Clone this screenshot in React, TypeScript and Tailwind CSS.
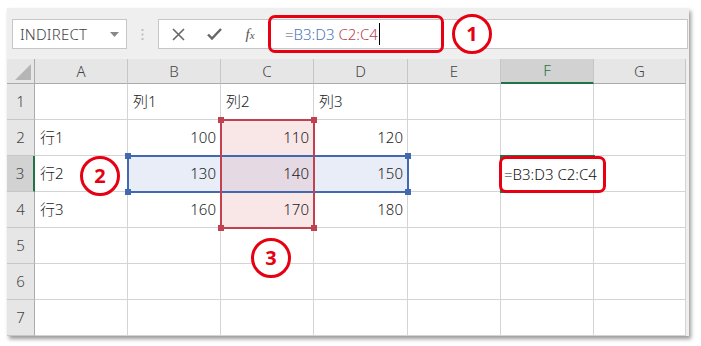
import React from 'react';

const COLS = ['A', 'B', 'C', 'D', 'E', 'F', 'G'];

type Cell = { text?: string; align?: 'left' | 'right'; bg?: string };

const ROWS: Cell[][] = [
  [{}, { text: '列1' }, { text: '列2' }, { text: '列3' }, {}, {}, {}],
  [{ text: '行1' }, { text: '100', align: 'right' }, { text: '110', align: 'right', bg: 'bg-[#f9e6e7]' }, { text: '120', align: 'right' }, {}, {}, {}],
  [
    { text: '行2' },
    { text: '130', align: 'right', bg: 'bg-[#e8edf7]' },
    { text: '140', align: 'right', bg: 'bg-[#e5dae4]' },
    { text: '150', align: 'right', bg: 'bg-[#e8edf7]' },
    {},
    {},
    {},
  ],
  [{ text: '行3' }, { text: '160', align: 'right' }, { text: '170', align: 'right', bg: 'bg-[#f9e6e7]' }, { text: '180', align: 'right' }, {}, {}, {}],
  [{}, {}, {}, {}, {}, {}, {}],
  [{}, {}, {}, {}, {}, {}, {}],
  [{}, {}, {}, {}, {}, {}, {}],
];

function Badge({ n, className }: { n: string; className: string }) {
  return (
    <div
      className={`absolute w-[40px] h-[40px] rounded-full border-[3px] border-[#e60012] bg-white flex items-center justify-center text-[#e60012] text-[20px] font-bold ${className}`}
      style={{ fontFamily: '"Noto Sans", sans-serif' }}
    >
      {n}
    </div>
  );
}

function Handle({ className }: { className: string }) {
  return <div className={`absolute w-[6px] h-[6px] ${className}`} />;
}

export default function App() {
  return (
    <div className="w-[701px] h-[346px] bg-white pt-[8px] pl-[7px] overflow-hidden" style={{ fontFamily: '"Noto Sans", "Noto Sans CJK JP", sans-serif' }}>
      <div className="w-[682px] bg-[#efefef] shadow-[2px_3px_4px_rgba(0,0,0,0.4)]">
        {/* toolbar */}
        <div className="h-[51px] pt-[11px] pl-[5px] pr-[1px] flex items-start">
          <div className="w-[115px] h-[30px] bg-white border border-[#c6c6c6] flex items-center justify-between pl-[7px] pr-[7px]">
            <span className="text-[15px] text-[#444] font-light tracking-[0.2px]">INDIRECT</span>
            <svg width="9" height="5" viewBox="0 0 9 5"><path d="M0 0h9L4.5 5z" fill="#888" /></svg>
          </div>
          <div className="w-[31px] h-[30px] flex items-center justify-center">
            <svg width="3" height="11" viewBox="0 0 3 11">
              <rect x="0.5" y="0" width="2" height="2" fill="#c0c0c0" />
              <rect x="0.5" y="4.5" width="2" height="2" fill="#c0c0c0" />
              <rect x="0.5" y="9" width="2" height="2" fill="#c0c0c0" />
            </svg>
          </div>
          <div className="relative flex-1 h-[30px] bg-white border border-[#c6c6c6] flex items-center">
            <div className="w-[38px] flex justify-center">
              <svg width="13" height="13" viewBox="0 0 13 13"><path d="M1 1l11 11M12 1L1 12" stroke="#666" strokeWidth="1.6" /></svg>
            </div>
            <div className="w-[34px] flex justify-center">
              <svg width="15" height="12" viewBox="0 0 15 12"><path d="M1 6.5l4 4L14 1" stroke="#666" strokeWidth="2.4" fill="none" /></svg>
            </div>
            <div className="w-[38px] flex justify-center">
              <span className="italic text-[15px] text-[#555]" style={{ fontFamily: '"Liberation Serif", serif' }}>
                f<span className="text-[11px]">x</span>
              </span>
            </div>
            <div className="flex items-center pl-[16px] text-[15px] font-light whitespace-nowrap">
              <span className="text-[#555]">=</span>
              <span className="text-[#4a76b8]">B3:D3</span>
              <span className="text-[#b8444f]">&nbsp;C2:C4</span>
              <span className="w-[1px] h-[22px] bg-black ml-[1px]" />
            </div>
            <div className="absolute left-[109px] top-[-5px] w-[176px] h-[38px] rounded-[7px] border-[3px] border-[#e60012]" />
            <Badge n="1" className="left-[293px] top-[-6px]" />
          </div>
        </div>

        {/* sheet */}
        <div className="relative grid grid-cols-[28px_93px_93px_93px_94px_93px_93px_92px_3px] grid-rows-[25px_repeat(7,36px)] text-[15px] font-light text-[#222]">
          {/* corner */}
          <div className="bg-[#e6e6e6] border-r border-b border-[#ababab] flex items-end justify-end pr-[3px] pb-[3px]">
            <svg width="16" height="16" viewBox="0 0 16 16"><path d="M16 0V16H0z" fill="#b5b5b5" /></svg>
          </div>
          {COLS.map((c) => (
            <div
              key={c}
              className={
                c === 'F'
                  ? 'bg-[#d2d2d2] border-r border-[#c6c6c6] border-b-2 border-b-[#217346] flex items-center justify-center text-[#217346]'
                  : 'bg-[#e6e6e6] border-r border-b border-[#c6c6c6] border-b-[#ababab] flex items-center justify-center text-[#444]'
              }
            >
              {c}
            </div>
          ))}
          <div className="bg-[#efefef]" />

          {ROWS.map((row, r) => (
            <React.Fragment key={r}>
              <div
                className={
                  r === 2
                    ? 'bg-[#d2d2d2] border-r-2 border-r-[#217346] border-b border-[#c6c6c6] flex items-center justify-center text-[#444]'
                    : 'bg-[#e6e6e6] border-r border-r-[#ababab] border-b border-[#c6c6c6] flex items-center justify-center text-[#444]'
                }
              >
                {r + 1}
              </div>
              {row.map((cell, c) => (
                <div
                  key={c}
                  className={`${cell.bg ?? 'bg-white'} border-r border-b border-[#d4d4d4] flex items-center whitespace-nowrap ${
                    cell.align === 'right' ? 'justify-end pr-[4px]' : 'pl-[5px]'
                  }`}
                >
                  {cell.text}
                </div>
              ))}
              <div className="bg-[#efefef]" />
            </React.Fragment>
          ))}

          {/* active cell F3 */}
          <div className="absolute left-[493px] top-[96px] w-[95px] h-[38px] border-2 border-[#217346]" />
          <div className="absolute left-[492px] top-[97px] w-[107px] h-[37px] rounded-[7px] border-[3px] border-[#e60012] bg-white flex items-center pl-[2px] text-[15px] text-[#111] whitespace-nowrap">
            =B3:D3 C2:C4
          </div>

          {/* blue selection B3:D3 */}
          <div className="absolute left-[120px] top-[96px] w-[282px] h-[38px] border-2 border-[#4169b0]" />
          <Handle className="bg-[#4169b0] left-[118px] top-[94px]" />
          <Handle className="bg-[#4169b0] left-[398px] top-[94px]" />
          <Handle className="bg-[#4169b0] left-[118px] top-[130px]" />
          <Handle className="bg-[#4169b0] left-[398px] top-[130px]" />

          {/* red selection C2:C4 */}
          <div className="absolute left-[213px] top-[60px] w-[95px] h-[110px] border-2 border-[#c0414f]" />
          <Handle className="bg-[#c0414f] left-[211px] top-[58px]" />
          <Handle className="bg-[#c0414f] left-[304px] top-[58px]" />
          <Handle className="bg-[#c0414f] left-[211px] top-[166px]" />
          <Handle className="bg-[#c0414f] left-[304px] top-[166px]" />

          <Badge n="2" className="left-[73px] top-[97px]" />
          <Badge n="3" className="left-[244px] top-[179px]" />
        </div>
      </div>
    </div>
  );
}
